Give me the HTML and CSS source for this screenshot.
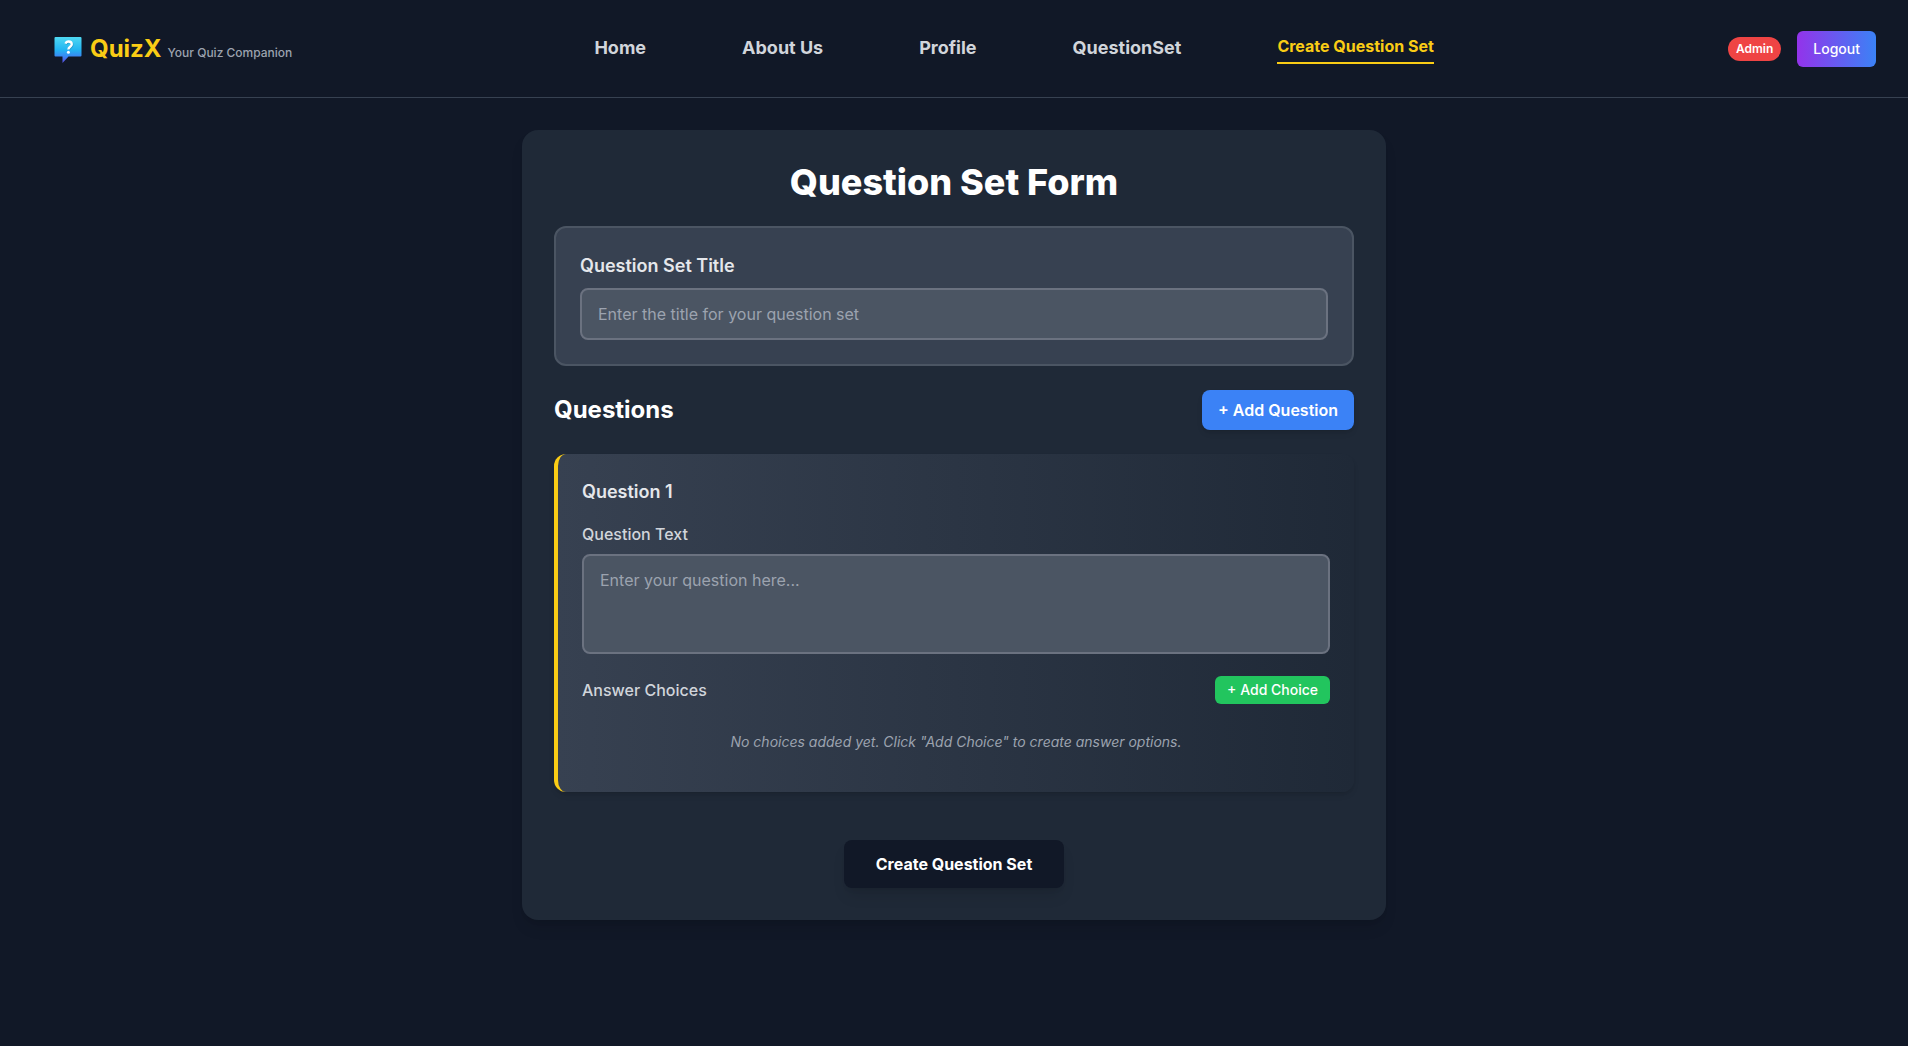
FILE: index.html
```html
<!DOCTYPE html>
<html lang="en">
<head>
<meta charset="utf-8">
<meta name="viewport" content="width=device-width, initial-scale=1">
<title>QuizX - Create Question Set</title>
<link rel="stylesheet" href="styles.css">
</head>
<body>
<header class="header">
  <a class="brand" href="#">
    <svg class="brand-icon" viewBox="0 0 28 28" aria-hidden="true">
      <defs>
        <linearGradient id="bubble" x1="0" y1="0" x2="0" y2="1">
          <stop offset="0" stop-color="#4fd8f2"/>
          <stop offset=".5" stop-color="#22b4f2"/>
          <stop offset=".75" stop-color="#3b86f3"/>
          <stop offset="1" stop-color="#5a48e0"/>
        </linearGradient>
      </defs>
      <path d="M1.500 1h25q1 0 1 1v17.500q0 1-1 1H14.500L8.500 27V20.500h-7q-1 0-1-1V2q0-1 1-1z" fill="url(#bubble)"/>
      <path d="M11.500 7.700c.6-1.700 1.700-2.200 3.100-2.200 1.900 0 3.200 1 3.200 2.700 0 2.500-3.400 2.600-3.400 5.200" transform="translate(.7 .7)" fill="none" stroke="#176f9c" stroke-opacity=".5" stroke-width="2"/>
      <path d="M11.500 7.700c.6-1.700 1.700-2.200 3.100-2.200 1.900 0 3.200 1 3.200 2.700 0 2.500-3.400 2.600-3.400 5.200" fill="none" stroke="#fff" stroke-width="2.300"/>
      <circle cx="14.400" cy="16.300" r="1.500" fill="#fff"/>
    </svg>
    <span class="brand-name">QuizX</span>
    <span class="brand-tagline">Your Quiz Companion</span>
  </a>
  <nav class="nav">
    <a class="nav-link" href="#">Home</a>
    <a class="nav-link" href="#">About Us</a>
    <a class="nav-link" href="#">Profile</a>
    <a class="nav-link" href="#">QuestionSet</a>
    <a class="nav-link nav-link-active" href="#" aria-current="page">Create Question Set</a>
  </nav>
  <div class="account">
    <span class="role">Admin</span>
    <button class="logout" type="button">Logout</button>
  </div>
</header>
<main class="main">
  <form class="card">
    <h1 class="title">Question Set Form</h1>
    <div class="title-box">
      <label class="title-label" for="set-title">Question Set Title</label>
      <input class="field" id="set-title" type="text" placeholder="Enter the title for your question set">
    </div>
    <div class="row questions-head">
      <h2 class="subtitle">Questions</h2>
      <button class="add-question" type="button">+ Add Question</button>
    </div>
    <section class="question">
      <h3 class="question-title">Question 1</h3>
      <label class="label" for="question-text">Question Text</label>
      <textarea class="field question-text" id="question-text" placeholder="Enter your question here..."></textarea>
      <div class="row choices-head">
        <span class="label-text">Answer Choices</span>
        <button class="add-choice" type="button">+ Add Choice</button>
      </div>
      <p class="empty">No choices added yet. Click "Add Choice" to create answer options.</p>
    </section>
    <button class="submit" type="submit">Create Question Set</button>
  </form>
</main>
</body>
</html>
```
FILE: styles.css
```css
*, *::before, *::after {
  box-sizing: border-box;
}

body {
  margin: 0;
  min-height: 100vh;
  background: #111827;
  color: #fff;
  font-family: Inter, "Liberation Sans", sans-serif;
  font-size: 16px;
  line-height: 24px;
}

h1, h2, h3, p {
  margin: 0;
}

button, input, textarea {
  font: inherit;
  color: inherit;
}

button {
  border: 0;
  cursor: pointer;
}

a {
  color: inherit;
  text-decoration: none;
}

.header {
  display: flex;
  align-items: center;
  justify-content: space-between;
  padding: 31px 32px 30px;
  border-bottom: 1px solid #374151;
}

.brand {
  display: flex;
  align-items: baseline;
  padding: 0 8px 0 22px;
}

.brand-icon {
  width: 28px;
  height: 28px;
  margin-right: 8px;
  align-self: flex-end;
}

.brand-name {
  margin-right: 6px;
  color: #facc15;
  font-size: 24px;
  font-weight: 700;
  line-height: 30px;
}

.brand-tagline {
  color: #9ca3af;
  font-size: 12px;
  font-weight: 500;
  line-height: 16px;
}

.nav {
  display: flex;
  align-items: flex-start;
  gap: 96px;
}

.nav-link {
  color: #d1d5db;
  font-size: 18px;
  font-weight: 700;
  line-height: 28px;
}

.nav-link-active {
  padding-bottom: 4px;
  border-bottom: 2px solid #facc15;
  color: #facc15;
  font-size: 16px;
  line-height: 24px;
}

.account {
  display: flex;
  align-items: center;
  gap: 16px;
}

.role {
  padding: 4px 8px;
  border-radius: 12px;
  background: #ef4444;
  font-size: 12px;
  font-weight: 600;
  line-height: 16px;
}

.logout {
  padding: 8px 16px;
  border-radius: 6px;
  background: linear-gradient(to right, #9333ea, #3b82f6);
  font-size: 14px;
  font-weight: 500;
  line-height: 20px;
}

.main {
  max-width: 896px;
  margin: 0 auto;
  padding: 32px 16px;
}

.card {
  padding: 32px;
  border-radius: 16px;
  background: #1f2937;
  box-shadow: 0 10px 15px -3px rgb(0 0 0 / 10%), 0 4px 6px -4px rgb(0 0 0 / 10%);
}

.title {
  margin-bottom: 24px;
  font-size: 36px;
  font-weight: 800;
  line-height: 40px;
  text-align: center;
}

.title-box {
  padding: 24px;
  border: 2px solid #4b5563;
  border-radius: 12px;
  background: #374151;
}

.title-label {
  display: block;
  margin-bottom: 8px;
  color: #e5e7eb;
  font-size: 18px;
  font-weight: 600;
  line-height: 28px;
}

.field {
  display: block;
  width: 100%;
  padding: 12px 16px;
  border: 2px solid #6b7280;
  border-radius: 8px;
  background: #4b5563;
}

.field::placeholder {
  color: #9ca3af;
}

.row {
  display: flex;
  align-items: center;
  justify-content: space-between;
}

.questions-head {
  margin: 24px 0;
}

.subtitle {
  font-size: 24px;
  font-weight: 700;
  line-height: 32px;
}

.add-question {
  padding: 8px 16px;
  border-radius: 8px;
  background: #3b82f6;
  font-weight: 600;
  box-shadow: 0 4px 6px -1px rgb(0 0 0 / 10%), 0 2px 4px -2px rgb(0 0 0 / 10%);
}

.question {
  padding: 24px;
  border-left: 4px solid #facc15;
  border-radius: 12px;
  background: linear-gradient(to right, #374151, #1f2937);
  box-shadow: 0 4px 6px -1px rgb(0 0 0 / 10%), 0 2px 4px -2px rgb(0 0 0 / 10%);
}

.question-title {
  margin-bottom: 16px;
  color: #e5e7eb;
  font-size: 18px;
  font-weight: 600;
  line-height: 28px;
}

.label {
  display: block;
  margin-bottom: 8px;
}

.label, .label-text {
  color: #d1d5db;
  font-weight: 500;
}

.question-text {
  height: 100px;
  resize: none;
}

.choices-head {
  margin: 22px 0 12px;
}

.add-choice {
  padding: 4px 12px;
  border-radius: 6px;
  background: #22c55e;
  font-size: 14px;
  font-weight: 500;
  line-height: 20px;
}

.empty {
  padding: 16px 0;
  color: #9ca3af;
  font-size: 14px;
  font-style: italic;
  line-height: 20px;
  text-align: center;
}

.submit {
  display: block;
  margin: 48px auto 0;
  padding: 12px 32px;
  border-radius: 8px;
  background: #111827;
  font-weight: 700;
  box-shadow: 0 10px 15px -3px rgb(0 0 0 / 10%), 0 4px 6px -4px rgb(0 0 0 / 10%);
}
```
